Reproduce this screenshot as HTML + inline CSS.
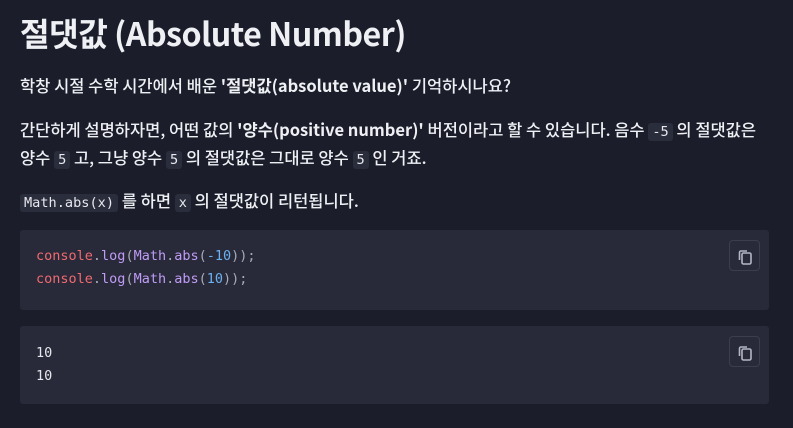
<!DOCTYPE html>
<html><head><meta charset="utf-8"><style>
*{margin:0;padding:0;box-sizing:border-box}
body{width:793px;height:428px;overflow:hidden;background:#1b1d2a;color:#eef0f4;font-family:"Noto Sans CJK KR","Liberation Sans",sans-serif;}
h1{position:absolute;left:20px;top:9px;font-size:32.2px;font-weight:700;letter-spacing:-0.5px;line-height:48px}
p{position:absolute;left:20px;font-size:16.5px;font-weight:500;line-height:28px;letter-spacing:0;white-space:nowrap}
b{font-weight:700}
code{font-family:"DejaVu Sans Mono","Liberation Mono",monospace;font-size:13.6px;background:#2a2d3c;border-radius:3px;padding:1px 4px;font-weight:400;color:#e8e8ee}
.blk{position:absolute;left:20px;width:749px;background:#282a39;border-radius:3px;font-family:"DejaVu Sans Mono","Liberation Mono",monospace;font-size:13.5px;line-height:23px;padding-left:16px;color:#e6e6ec}
.btn{position:absolute;right:9px;top:10px;width:31px;height:31px;border:1px solid #3b3e4e;border-radius:4px;}
.r{color:#f06a70}.p{color:#c09cf6}.b{color:#6cb0f0}.g{color:#a9aab8}
</style></head><body>
<h1>절댓값 (Absolute Number)</h1>
<p style="top:71px">학창 시절 수학 시간에서 배운 <b>'절댓값(absolute value)'</b> 기억하시나요?</p>
<p style="top:115px">간단하게 설명하자면, 어떤 값의 <b>'양수(positive number)'</b> 버전이라고 할 수 있습니다. 음수 <code>-5</code> 의 절댓값은</p>
<p style="top:143px">양수 <code>5</code> 고, 그냥 양수 <code>5</code> 의 절댓값은 그대로 양수 <code>5</code> 인 거죠.</p>
<p style="top:186px"><code>Math.abs(x)</code> 를 하면 <code>x</code> 의 절댓값이 리턴됩니다.</p>
<div class="blk" style="top:230px;height:80px;padding-top:15px">
<div><span class="r">console</span><span class="g">.</span><span class="p">log</span><span class="g">(</span><span class="p">Math</span><span class="g">.</span><span class="p">abs</span><span class="g">(</span><span class="b">-10</span><span class="g">));</span></div>
<div><span class="r">console</span><span class="g">.</span><span class="p">log</span><span class="g">(</span><span class="p">Math</span><span class="g">.</span><span class="p">abs</span><span class="g">(</span><span class="b">10</span><span class="g">));</span></div>
<div class="btn"><svg width="31" height="31" viewBox="0 0 31 31"><rect x="12" y="12" width="9" height="11" rx="1.5" fill="none" stroke="#b4b7c6" stroke-width="1.6"/><path d="M9.5 19V11.5A1.5 1.5 0 0 1 11 10h6" fill="none" stroke="#b4b7c6" stroke-width="1.6"/></svg></div>
</div>
<div class="blk" style="top:326px;height:78px;padding-top:16px">
<div>10</div><div>10</div>
<div class="btn"><svg width="31" height="31" viewBox="0 0 31 31"><rect x="12" y="12" width="9" height="11" rx="1.5" fill="none" stroke="#b4b7c6" stroke-width="1.6"/><path d="M9.5 19V11.5A1.5 1.5 0 0 1 11 10h6" fill="none" stroke="#b4b7c6" stroke-width="1.6"/></svg></div>
</div>
</body></html>
